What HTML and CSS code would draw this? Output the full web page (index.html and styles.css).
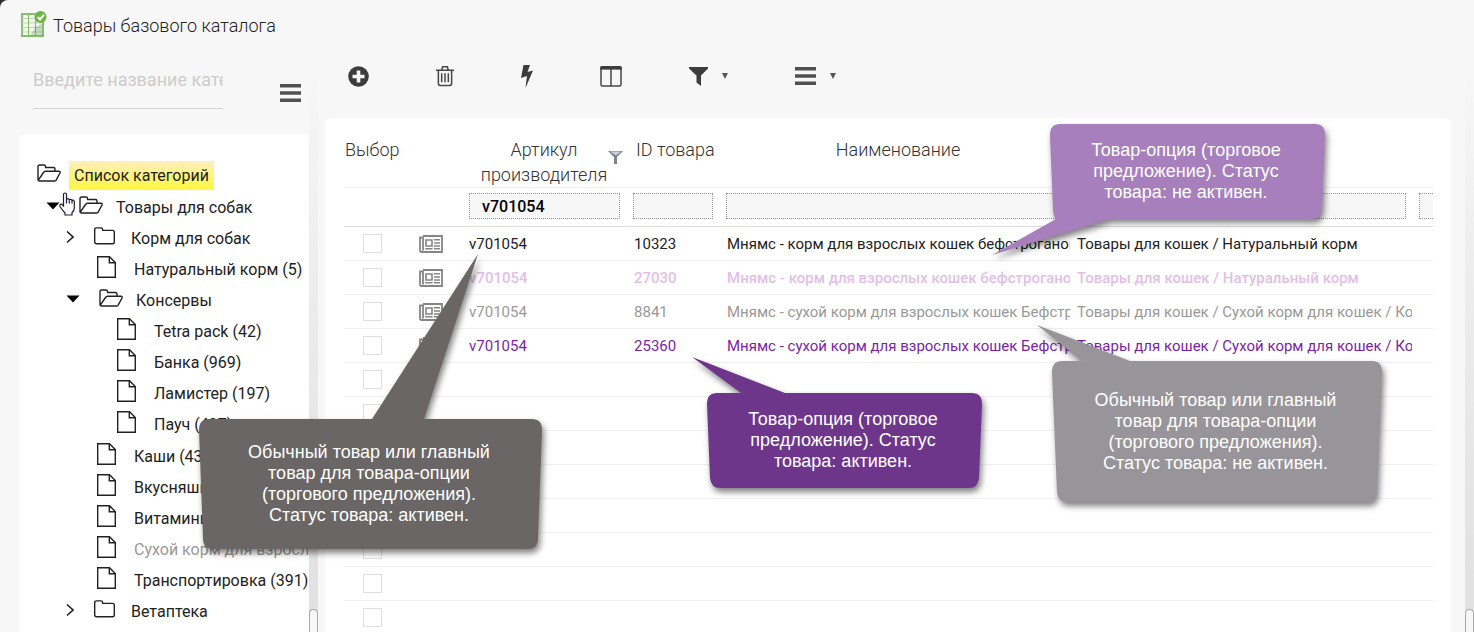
FILE: index.html
```html
<!DOCTYPE html>
<html lang="ru">
<head>
<meta charset="utf-8">
<title>Товары базового каталога</title>
<link rel="stylesheet" href="styles.css">
</head>
<body>
<svg class="sprite" aria-hidden="true">
  <symbol id="open" viewBox="0 0 24 18"><path d="M1 15.500V2.500Q1 1 2.500 1H7Q8.500 1 8.500 2.500V3.500H16.500Q18 3.500 18 5V7M1 15.500Q1 17 2.500 17H17.500Q18.500 17 19 16.300L23 9Q23.600 7.300 22 7.300H8.500Q7.300 7.300 6.500 8.500L1.500 15.800" fill="none" stroke="#222" stroke-width="1.400" stroke-linejoin="round"/></symbol>
  <symbol id="closed" viewBox="0 0 21 18"><path d="M.7 15V2.700Q.7.900 2.500.900H7Q8.600.900 8.600 2.500V3.400H18.500Q20.300 3.400 20.300 5.200V15Q20.300 16.800 18.500 16.800H2.500Q.7 16.800.7 15Z" fill="none" stroke="#222" stroke-width="1.400"/></symbol>
  <symbol id="file" viewBox="0 0 19 22"><path d="M.7.700H12.500L18.300 6.500V21.300H.7ZM12.300.700V6.700H18.300" fill="none" stroke="#222" stroke-width="1.400"/></symbol>
  <symbol id="down" viewBox="0 0 14 8"><path d="M.5.500H13.500L7 7.500Z" fill="#000"/></symbol>
  <symbol id="right" viewBox="0 0 8 14"><path d="M1 1.500L7 7L1 12.500" fill="none" stroke="#222" stroke-width="1.600"/></symbol>
  <symbol id="menu" viewBox="0 0 21 18"><path d="M0 0H21V3.500H0ZM0 7.200H21V10.700H0ZM0 14.400H21V17.900H0Z" fill="#505050"/></symbol>
  <symbol id="caret" viewBox="0 0 6 6"><path d="M0 0H6L3 6Z" fill="#555"/></symbol>
  <symbol id="card" viewBox="0 0 24 18"><path d="M4 1H23V17H2.500Q1 17 1 15.500V2.500H4V15.500" fill="none" stroke="#858585" stroke-width="1.800"/><path d="M7 5H13V11H7Z" fill="none" stroke="#858585" stroke-width="1.600"/><path d="M15 4.800H21M15 8H21M15 11H21M6.200 13.800H13.500M15 13.800H21" stroke="#858585" stroke-width="1.500"/></symbol>
</svg>
<div class="page">
  <header class="title">
    <svg width="26" height="27" viewBox="0 0 26 27"><path d="M1 3H22V25H1Z" fill="#f4f8f0" stroke="#86c06a" stroke-width="2"/><path d="M1 7.500H22M1 12H22M1 16.500H22M1 21H22" stroke="#c3d6b8" stroke-width="1.200"/><path d="M7.500 3V25M14.500 3V25" stroke="#86c06a" stroke-width="1.200"/><path d="M14.500 16L22 12V25H9Z" fill="#579b4b" opacity=".3"/><circle cx="19.500" cy="6" r="6" fill="#69b545"/><path d="M16.500 6L19 8.500L23 3.700" fill="none" stroke="#fff" stroke-width="2"/></svg>
    <h1>Товары базового каталога</h1>
  </header>
  <div class="body">
    <aside class="sidebar">
      <div class="search">
        <input type="text" placeholder="Введите название категории" aria-label="Введите название категории">
        <button class="icon-btn" aria-label="Меню категорий"><svg width="21" height="18"><use href="#menu"/></svg></button>
      </div>
      <nav class="tree">
        <div class="row root"><span class="icon"><svg width="24" height="18"><use href="#open"/></svg></span><a href="#" class="current">Список категорий</a></div>
        <ul>
          <li><div class="row open"><button class="toggle" aria-label="Свернуть"><svg width="14" height="8"><use href="#down"/></svg></button><span class="icon"><svg width="24" height="18"><use href="#open"/></svg></span><a href="#">Товары для собак</a></div>
            <ul>
              <li><div class="row closed"><button class="toggle" aria-label="Развернуть"><svg width="8" height="14"><use href="#right"/></svg></button><span class="icon"><svg width="21" height="18"><use href="#closed"/></svg></span><a href="#">Корм для собак</a></div></li>
              <li><div class="row leaf"><span class="icon"><svg width="19" height="22"><use href="#file"/></svg></span><a href="#">Натуральный корм (5)</a></div></li>
              <li><div class="row open"><button class="toggle" aria-label="Свернуть"><svg width="14" height="8"><use href="#down"/></svg></button><span class="icon"><svg width="24" height="18"><use href="#open"/></svg></span><a href="#">Консервы</a></div>
                <ul>
                  <li><div class="row leaf"><span class="icon"><svg width="19" height="22"><use href="#file"/></svg></span><a href="#">Tetra pack (42)</a></div></li>
                  <li><div class="row leaf"><span class="icon"><svg width="19" height="22"><use href="#file"/></svg></span><a href="#">Банка (969)</a></div></li>
                  <li><div class="row leaf"><span class="icon"><svg width="19" height="22"><use href="#file"/></svg></span><a href="#">Ламистер (197)</a></div></li>
                  <li><div class="row leaf"><span class="icon"><svg width="19" height="22"><use href="#file"/></svg></span><a href="#">Пауч (497)</a></div></li>
                </ul>
              </li>
              <li><div class="row leaf"><span class="icon"><svg width="19" height="22"><use href="#file"/></svg></span><a href="#">Каши (43)</a></div></li>
              <li><div class="row leaf"><span class="icon"><svg width="19" height="22"><use href="#file"/></svg></span><a href="#">Вкусняшки</a></div></li>
              <li><div class="row leaf"><span class="icon"><svg width="19" height="22"><use href="#file"/></svg></span><a href="#">Витамины</a></div></li>
              <li><div class="row leaf"><span class="icon"><svg width="19" height="22"><use href="#file"/></svg></span><a href="#" class="muted">Сухой корм для взрослых</a></div></li>
              <li><div class="row leaf"><span class="icon"><svg width="19" height="22"><use href="#file"/></svg></span><a href="#">Транспортировка (391)</a></div></li>
              <li><div class="row closed"><button class="toggle" aria-label="Развернуть"><svg width="8" height="14"><use href="#right"/></svg></button><span class="icon"><svg width="21" height="18"><use href="#closed"/></svg></span><a href="#">Ветаптека</a></div></li>
            </ul>
          </li>
        </ul>
      </nav>
    </aside>
    <div class="scroll"><div class="thumb"></div></div>
    <main class="main">
      <div class="toolbar">
        <button class="icon-btn" aria-label="Добавить"><svg width="21" height="21" viewBox="0 0 21 21"><circle cx="10.500" cy="10.500" r="10.300" fill="#3c3c3c"/><path d="M10.500 4.500V16.500M4.500 10.500H16.500" stroke="#f7f7f7" stroke-width="3.600"/></svg></button>
        <button class="icon-btn" aria-label="Удалить"><svg width="18" height="22" viewBox="0 0 19 22"><path d="M0 5H19M6 5L7 1.200H12L13 5M2.500 5V19Q2.500 21 4.500 21H14.500Q16.500 21 16.500 19V5M6 8V17.500M9.500 8V17.500M13 8V17.500" fill="none" stroke="#484848" stroke-width="1.600"/></svg></button>
        <button class="icon-btn" aria-label="Действия"><svg width="12" height="23" viewBox="0 0 12 23"><path d="M2.500 0H9L6.500 7L12 5.500L4.500 23L6 11L0 13Z" fill="#3c3c3c"/></svg></button>
        <button class="icon-btn" aria-label="Столбцы"><svg width="22" height="21" viewBox="0 0 22 21"><path d="M1 2.500H21V18.500Q21 20 19.500 20H2.500Q1 20 1 18.500ZM11 3V20" fill="none" stroke="#484848" stroke-width="1.500"/><path d="M0 3.500V2Q0 0 2 0H20Q22 0 22 2V3.500Z" fill="#3c3c3c"/></svg></button>
        <button class="icon-btn drop" aria-label="Фильтр"><svg width="19" height="19" viewBox="0 0 19 19"><path d="M0 0H19V1.500L12 8.500V19L7.500 15.500V8.500L0 1.500Z" fill="#3c3c3c"/></svg><svg width="6" height="6"><use href="#caret"/></svg></button>
        <button class="icon-btn drop" aria-label="Меню"><svg width="21" height="18"><use href="#menu"/></svg><svg width="6" height="6"><use href="#caret"/></svg></button>
      </div>
      <section class="card">
        <table>
          <colgroup><col class="c-sel"><col class="c-ico"><col class="c-art"><col class="c-id"><col class="c-name"><col><col class="c-end"></colgroup>
          <thead>
            <tr class="head"><th class="first" colspan="2">Выбор</th><th><div class="sorted"><span>Артикул производителя</span><svg width="15" height="13" viewBox="0 0 15 13"><path d="M0 0H15L9 6V13H6V6Z" fill="#7b8490"/><path d="M2 .5H13L8 4.500Z" fill="#c9d0d6"/></svg></div></th><th class="id">ID товара</th><th>Наименование</th><th></th><th></th></tr>
            <tr class="filters"><td colspan="2"></td><td><input type="text" value="v701054" aria-label="Артикул производителя"></td><td><input type="text" aria-label="ID товара"></td><td colspan="2"><input type="text" aria-label="Наименование"></td><td class="cut"><input type="text" aria-label="Фильтр"></td></tr>
          </thead>
          <tbody>
            <tr><td class="sel"><input type="checkbox" aria-label="Выбрать 10323"></td><td class="ico"><svg width="24" height="18"><use href="#card"/></svg></td><td>v701054</td><td class="id">10323</td><td>Мнямс - корм для взрослых кошек бефстроганов</td><td>Товары для кошек / Натуральный корм</td><td></td></tr>
            <tr class="option-off"><td class="sel"><input type="checkbox" aria-label="Выбрать 27030"></td><td class="ico"><svg width="24" height="18"><use href="#card"/></svg></td><td>v701054</td><td class="id">27030</td><td>Мнямс - корм для взрослых кошек бефстроганов</td><td>Товары для кошек / Натуральный корм</td><td></td></tr>
            <tr class="off"><td class="sel"><input type="checkbox" aria-label="Выбрать 8841"></td><td class="ico"><svg width="24" height="18"><use href="#card"/></svg></td><td>v701054</td><td class="id">8841</td><td>Мнямс - сухой корм для взрослых кошек Бефстроганов</td><td>Товары для кошек / Сухой корм для кошек / Корм</td><td></td></tr>
            <tr class="option"><td class="sel"><input type="checkbox" aria-label="Выбрать 25360"></td><td class="ico"><svg width="24" height="18"><use href="#card"/></svg></td><td>v701054</td><td class="id">25360</td><td>Мнямс - сухой корм для взрослых кошек Бефстроганов</td><td>Товары для кошек / Сухой корм для кошек / Корм</td><td></td></tr>
            <tr><td class="sel"><input type="checkbox" aria-label="Строка 5"></td><td colspan="6"></td></tr>
            <tr><td class="sel"><input type="checkbox" aria-label="Строка 6"></td><td colspan="6"></td></tr>
            <tr><td class="sel"><input type="checkbox" aria-label="Строка 7"></td><td colspan="6"></td></tr>
            <tr><td class="sel"><input type="checkbox" aria-label="Строка 8"></td><td colspan="6"></td></tr>
            <tr><td class="sel"><input type="checkbox" aria-label="Строка 9"></td><td colspan="6"></td></tr>
            <tr><td class="sel"><input type="checkbox" aria-label="Строка 10"></td><td colspan="6"></td></tr>
            <tr><td class="sel"><input type="checkbox" aria-label="Строка 11"></td><td colspan="6"></td></tr>
            <tr><td class="sel"><input type="checkbox" aria-label="Строка 12"></td><td colspan="6"></td></tr>
          </tbody>
        </table>
      </section>
    </main>
    <div class="scroll"><div class="thumb"></div></div>
  </div>

  <div class="callout main-on"><svg width="343" height="130"><path d="M10 0H173L279 -165L225 0H333Q343 0 343 11L339 119Q339 130 329 130H14Q4 130 4 119L0 11Q0 0 10 0Z"/></svg><p>Обычный товар или главный<br>товар для товара-опции<br>(торгового предложения).<br>Статус товара: активен.</p></div>
  <div class="callout option-on"><svg width="275" height="95"><path d="M10 0H34L-15 -36L78 0H265Q275 0 275 11L272 85Q271 95 262 95H13Q4 95 3 85L0 11Q0 0 10 0Z"/></svg><p>Товар-опция (торговое<br>предложение). Статус<br>товара: активен.</p></div>
  <div class="callout option-none"><svg width="275" height="95"><path d="M10 0H265Q275 0 275 11L272 85Q271 95 262 95H60L-58 131L6 95Q3 91 3 85L0 11Q0 0 10 0Z"/></svg><p>Товар-опция (торговое<br>предложение). Статус<br>товара: не активен.</p></div>
  <div class="callout main-none"><svg width="330" height="141"><path d="M10 0H30L-15 -36L78 0H320Q330 0 330 11L325 131Q324 141 315 141H15Q6 141 5 131L0 11Q0 0 10 0Z"/></svg><p>Обычный товар или главный<br>товар для товара-опции<br>(торгового предложения).<br>Статус товара: не активен.</p></div>
  <svg class="pointer" width="16" height="24" viewBox="0 0 16 24"><path d="M4.500 14V2.500Q4.500 1 6 1T7.500 2.500V8Q7.500 6.700 8.800 6.700T10.300 8.200Q10.500 7.300 11.600 7.300T13 8.700Q13.300 8 14.200 8.200T15.300 9.700V16Q15.300 19 13 20.500V23H6V21Q4 19 1 14.500Q.3 13 1.500 12.300T3.500 13ZM7.500 8V11.500M10.300 8.500V11.500M13 9V11.500" fill="#fff" stroke="#1d1d3a" stroke-width="1.200"/></svg>
</div>
</body>
</html>
```
FILE: styles.css
```css
* { box-sizing: border-box; }
body { margin: 0; background: #2d2a30; font-family: Roboto, "Liberation Sans", sans-serif; color: #222; }
.sprite { position: absolute; width: 0; height: 0; }
.page { position: relative; display: flex; flex-direction: column; height: 100vh; overflow: hidden; background: #f7f7f7; border-top-left-radius: 8px; }
svg { display: block; flex: none; overflow: visible; }
button { padding: 0; border: 0; background: none; cursor: pointer; }
a { color: inherit; text-decoration: none; }
input { font-family: inherit; border-radius: 0; outline: 0; }

.title { display: flex; align-items: center; gap: 6px; padding: 11px 21px 0; height: 38px; flex: none; }
.title h1 { margin: 0; padding-top: 2px; font-size: 18px; line-height: 26px; font-weight: 300; }
.body { display: flex; flex: 1; min-height: 0; }

.sidebar { display: flex; flex-direction: column; width: 309px; padding-left: 19px; flex: none; }
.search { display: flex; align-items: flex-end; justify-content: space-between; height: 96px; padding: 0 8px 25px 14px; flex: none; }
.search input { width: 190px; height: 58px; padding: 0; border: 0; border-bottom: 1px solid #d4d4d4; background: none; font-size: 18px; }
.search input::placeholder { color: #ccc; }
.search .icon-btn { padding-bottom: 7px; }

.tree { flex: 1; min-height: 0; padding: 26px 0 0 18px; overflow: hidden; background: #fff; border-top-left-radius: 6px; font-size: 16px; }
.tree ul { margin: 0; padding: 0 0 0 20px; list-style: none; }
.tree > ul { padding-left: 9px; }
.tree ul ul ul { padding-bottom: 1px; }
.row { display: flex; align-items: center; height: 31px; white-space: nowrap; }
.row a { line-height: 27px; padding-top: 2px; }
.icon { width: 37px; flex: none; padding-bottom: 3px; }
.root .icon { width: 32px; padding-bottom: 5px; }
.toggle { flex: none; padding-bottom: 2px; }
.open .toggle { width: 33px; }
.closed .toggle { width: 28px; }
.leaf { padding-left: 31px; }
.tree .current { padding: 0 5px; line-height: 29px; background: linear-gradient(#ffefbd, #fff73f); }
.tree .muted { color: #999; }

.scroll { display: flex; flex-direction: column; justify-content: flex-end; width: 9px; flex: none; margin-top: 32px; background: linear-gradient(#f7f7f7, #ececec 40%, #e0e0e0); }
.thumb { height: 23px; border: 1px solid #a8a8a8; border-bottom: 0; border-radius: 5px 5px 0 0; background: #f7f7f7; }

.main { display: flex; flex-direction: column; flex: 1; min-width: 0; padding: 0 14px 0 7px; }
.toolbar { display: flex; align-items: center; gap: 67px; height: 80px; padding: 0 23px 4px; flex: none; }
.drop { display: flex; align-items: center; gap: 14px; }
.card { flex: 1; min-height: 0; padding: 0 18px 0 19px; overflow: hidden; background: #fff; border-radius: 6px 6px 0 0; }
table { width: 100%; table-layout: fixed; border-collapse: collapse; font-size: 15px; }
th, td { padding: 0 0 0 7px; overflow: hidden; white-space: nowrap; text-align: left; }
.c-sel { width: 60px; }
.c-ico { width: 58px; }
.c-art { width: 164px; }
.c-id { width: 93px; }
.c-name { width: 351px; }
.c-end { width: 21px; }
.head { height: 69px; border-bottom: 1px solid #eee; }
.head th { padding-top: 19px; vertical-align: top; font-size: 18px; line-height: 25px; font-weight: 300; text-align: center; color: #333; }
.head .first { padding-left: 1px; text-align: left; }
.head .id { padding-left: 10px; text-align: left; }
.sorted { display: flex; align-items: center; justify-content: flex-end; padding-right: 3px; white-space: normal; }
.sorted span { width: 128px; }
.sorted svg { margin-bottom: 10px; }
.filters { height: 39px; border-bottom: 1px solid #ddd; }
.filters td { padding-top: 5px; vertical-align: top; }
.filters input { display: block; width: calc(100% - 6px); height: 26px; padding: 0 12px; border: 1px dotted #999; background: #f7f7f7; font-size: 16px; font-weight: 500; }
.filters .cut input { width: 40px; }
tbody tr { height: 34px; border-bottom: 1px solid #f0f0f0; }
tbody td.sel { padding-left: 19px; }
tbody td.ico { padding-left: 15px; }
tbody td.id { padding-left: 8px; }
tbody td:nth-child(5) { padding-left: 8px; }
.sel input { appearance: none; display: block; width: 19px; height: 19px; margin: 0; border: 1px solid #e0e0e0; background: #fff; }
.option-off { color: #e2bfe9; font-weight: 500; }
.off { color: #999; }
.option { color: #7c1fa5; }

.callout { position: absolute; display: flex; align-items: center; justify-content: center; color: #fff; font: 18px/21px "Liberation Sans", Arial, sans-serif; text-align: center; }
.callout svg { filter: drop-shadow(2px 4px 3px rgba(0, 0, 0, .5)); }
.callout p { position: absolute; margin: 0; padding-right: 3px; white-space: nowrap; }
.main-on { left: 199px; top: 419px; fill: #6a6665; }
.option-on { left: 707px; top: 393px; fill: #6e368b; }
.option-none { left: 1050px; top: 124px; fill: #a67fbc; }
.main-none { left: 1052px; top: 361px; fill: #98959a; }
.pointer { position: absolute; left: 59px; top: 192px; }
```
